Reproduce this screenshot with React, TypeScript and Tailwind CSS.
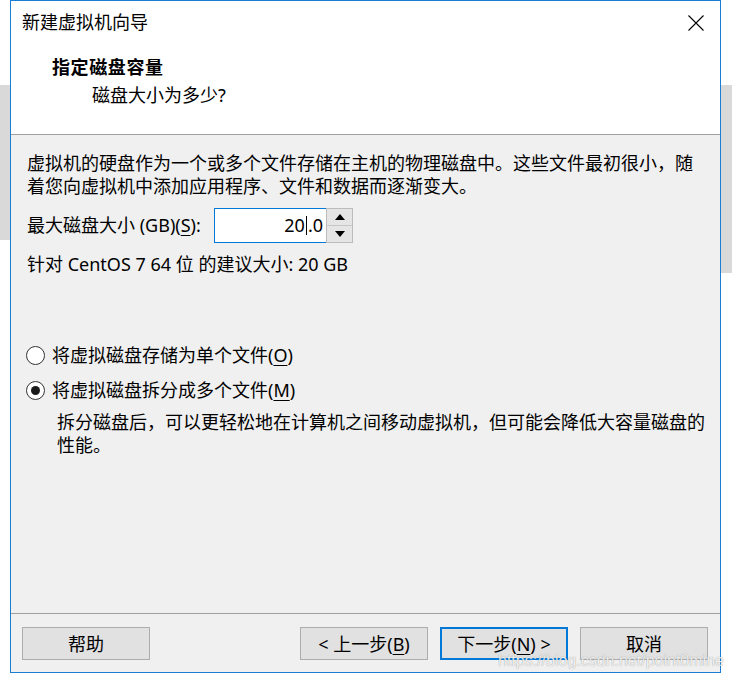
import type { ReactNode } from 'react'

const FONT = "font-['Noto_Sans','Noto_Sans_CJK_SC',sans-serif]"

function Key({ children }: { children: ReactNode }) {
  return <span className="underline decoration-1 underline-offset-[3px]">{children}</span>
}

function Radio({ checked, children }: { checked?: boolean; children: ReactNode }) {
  return (
    <div className="flex h-[23px] items-center">
      <div className="ml-[15px] flex h-[19px] w-[19px] items-center justify-center rounded-full border border-[#333] bg-white">
        {checked && <div className="h-[9px] w-[9px] rounded-full bg-[#1a1a1a]" />}
      </div>
      <span className="ml-[7px]">{children}</span>
    </div>
  )
}

function Spinner() {
  return (
    <div className="flex h-[35px] w-[27px] flex-col border border-[#bcbcbc] bg-[#e5e5e5]">
      <div className="flex flex-1 items-center justify-center border-b border-[#c8c8c8]">
        <svg width="10" height="6" viewBox="0 0 10 6">
          <polygon points="0,6 5,0 10,6" fill="#000" />
        </svg>
      </div>
      <div className="flex flex-1 items-center justify-center">
        <svg width="10" height="6" viewBox="0 0 10 6">
          <polygon points="0,0 10,0 5,6" fill="#000" />
        </svg>
      </div>
    </div>
  )
}

const BTN =
  'flex h-[33px] w-[128px] items-center justify-center border border-[#adadad] bg-[#e1e1e1] text-[18px] leading-none text-black'
const BTN_DEFAULT =
  'flex h-[33px] w-[128px] items-center justify-center border-2 border-[#0078d7] bg-[#e1e1e1] text-[18px] leading-none text-black'

export default function App() {
  return (
    <div className={`relative flex h-[683px] w-[732px] overflow-hidden bg-white text-black ${FONT}`}>
      {/* desktop behind the dialog */}
      <div className="w-[10px] shrink-0 pt-[85px]">
        <div className="h-[155px] bg-[#d9d9d9]" />
      </div>

      {/* dialog window */}
      <div className="flex h-[673px] w-[711px] shrink-0 flex-col border border-[#1a7fd4]">
        {/* header */}
        <div className="h-[133px] bg-white">
          <div className="flex h-[43px] items-center justify-between pl-[11px] pr-[16px]">
            <span className="text-[18px] leading-[23px]">新建虚拟机向导</span>
            <svg width="16" height="16" viewBox="0 0 16 16">
              <path d="M0.5 0.5L15.5 15.5M15.5 0.5L0.5 15.5" stroke="#000" strokeWidth="1.1" />
            </svg>
          </div>
          <div className="mt-[12px] pl-[41px] text-[18px] font-bold leading-[23px] tracking-[0.6px]">指定磁盘容量</div>
          <div className="mt-[5px] pl-[81px] text-[18px] leading-[23px]">磁盘大小为多少?</div>
        </div>
        <div className="h-px bg-[#a0a0a0]" />

        {/* body */}
        <div className="flex-1 bg-[#f0f0f0] pl-[16px] pt-[17px] text-[18px] leading-[23px]">
          <p>
            虚拟机的硬盘作为一个或多个文件存储在主机的物理磁盘中。这些文件最初很小，随
            <br />
            着您向虚拟机中添加应用程序、文件和数据而逐渐变大。
          </p>

          <div className="mt-[10px] flex h-[35px] items-center">
            <span className="w-[187px]">
              最大磁盘大小 (GB)(<Key>S</Key>):
            </span>
            <div className="flex h-[35px] w-[112px] items-center justify-end border border-r-0 border-[#0078d7] bg-white pr-[3px]">
              20
              <span className="mx-px h-[19px] w-px bg-black" />
              .0
            </div>
            <Spinner />
          </div>

          <p className="mt-[10px]">针对 CentOS 7 64 位 的建议大小: 20 GB</p>

          <div className="-ml-[16px] mt-[68px]">
            <Radio>
              将虚拟磁盘存储为单个文件(<Key>O</Key>)
            </Radio>
            <div className="mt-[12px]">
              <Radio checked>
                将虚拟磁盘拆分成多个文件(<Key>M</Key>)
              </Radio>
            </div>
          </div>

          <p className="mt-[9px] pl-[30px]">
            拆分磁盘后，可以更轻松地在计算机之间移动虚拟机，但可能会降低大容量磁盘的
            <br />
            性能。
          </p>
        </div>
        <div className="h-px bg-[#a0a0a0]" />

        {/* footer */}
        <div className="flex h-[58px] items-start justify-between bg-[#f0f0f0] pl-[11px] pr-[12px] pt-[13px]">
          <button className={BTN}>帮助</button>
          <div className="flex gap-[12px]">
            <button className={BTN}>
              &lt; 上一步(<Key>B</Key>)
            </button>
            <button className={BTN_DEFAULT}>
              下一步(<Key>N</Key>) &gt;
            </button>
            <button className={BTN}>取消</button>
          </div>
        </div>
      </div>

      <div className="w-[11px] shrink-0 pt-[85px]">
        <div className="h-[188px] bg-[#d9d9d9]" />
      </div>

      {/* watermark */}
      <span className="absolute left-[498px] top-[652px] font-['Liberation_Sans',sans-serif] text-[16px] leading-[18px] text-white/85 [text-shadow:0_0_1px_rgba(0,0,0,0.45)]">
        https://blog.csdn.net/point0mine
      </span>
    </div>
  )
}
